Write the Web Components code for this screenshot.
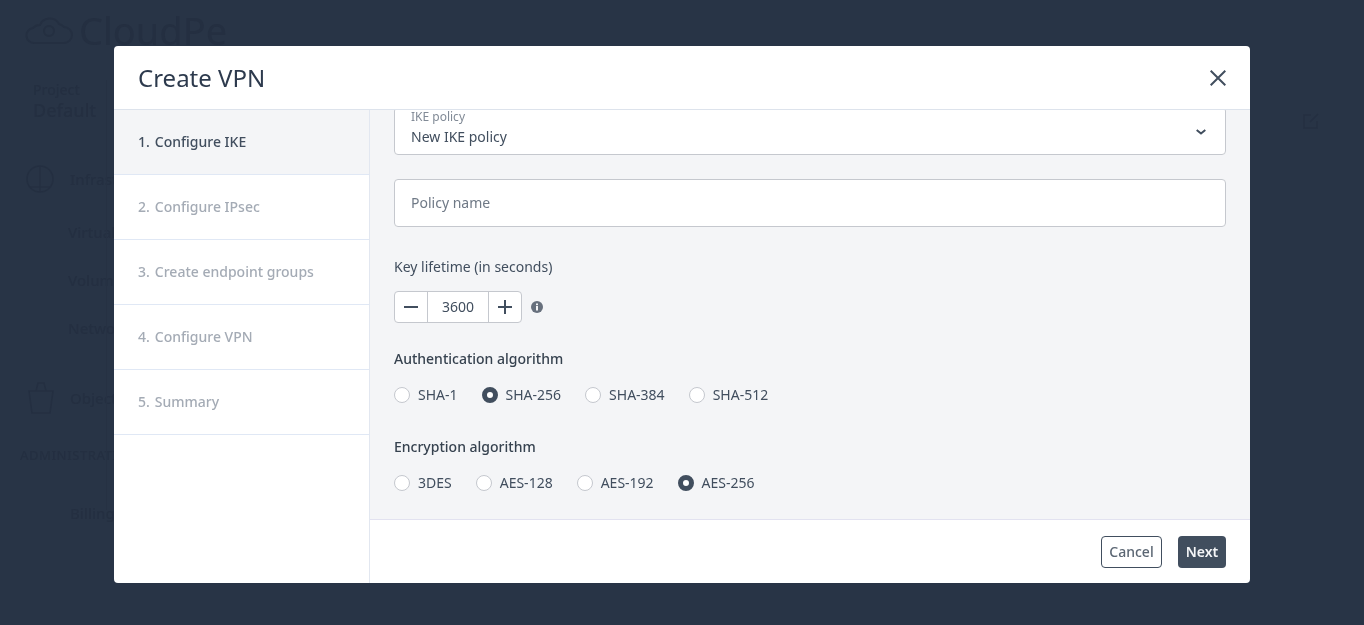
<!DOCTYPE html>
<html><head><meta charset="utf-8"><style>
html,body{margin:0;height:100%;overflow:hidden;background:#283446;font-family:"Noto Sans","Open Sans",sans-serif}
</style></head><body>
<app-backdrop></app-backdrop>
<vpn-modal title="Create VPN">
  <wizard-steps slot="steps"></wizard-steps>
  <ike-select label="IKE policy" value="New IKE policy"></ike-select>
  <text-field placeholder="Policy name"></text-field>
  <num-stepper label="Key lifetime (in seconds)" value="3600"></num-stepper>
  <radio-group style="--mt:26px" label="Authentication algorithm" options="SHA-1,SHA-256,SHA-384,SHA-512" checked="SHA-256"></radio-group>
  <radio-group style="--mt:32px" label="Encryption algorithm" options="3DES,AES-128,AES-192,AES-256" checked="AES-256"></radio-group>
  <action-btn slot="footer" style="--w:61px;--wt:530">Cancel</action-btn>
  <action-btn slot="footer" style="--w:48px" primary>Next</action-btn>
</vpn-modal>
<script>
function def(name, html, init){
  customElements.define(name, class extends HTMLElement{
    connectedCallback(){
      if(this.shadowRoot) return;
      const r=this.attachShadow({mode:'open'});
      r.innerHTML=typeof html==='function'?html(this):html;
      if(init) init(this,r);
    }
  });
}
def('app-backdrop',`<style>
:host{display:block;position:fixed;inset:0;color:#242f41;overflow:hidden;font-weight:500}
.top{display:flex;align-items:center;gap:5px;padding:10px 0 0 25px;height:40px;font-size:38px;line-height:40px;font-weight:400}
.wrap{position:relative;margin-top:30px;padding-left:33px}
.rule{width:1px;height:430px;background:#263143;position:absolute;left:106px;top:0}
.p{font-size:14px;line-height:20px}
.d{font-size:18px;line-height:24px;margin-top:-2px}
.i{display:flex;align-items:center;gap:16px;font-size:15px;line-height:20px;margin-left:-7px;white-space:nowrap}
.t{font-size:15px;line-height:20px;margin-left:35px}
.link{position:absolute;left:1302px;top:112px}
</style>
<div class="top"><svg width="49" height="29" viewBox="0 0 49 29" fill="none" stroke="#242f41" stroke-width="2"><path d="M10 27a7.500 7.500 0 0 1-2-15 9 9 0 0 1 7-3c3-8 15-9 19-1a9 9 0 0 1 5 3 8 8 0 0 1 0 16z"/><circle cx="24" cy="15" r="5"/></svg><span>CloudPe</span></div>
<div class="wrap"><div class="rule"></div>
<div class="p">Project</div><div class="d">Default</div>
<div class="i" style="margin-top:43px"><svg width="28" height="28" viewBox="0 0 28 28" fill="none" stroke="#242f41" stroke-width="1.500"><circle cx="14" cy="14" r="13"/><path d="M4 22h20M14 1v26"/></svg><span>Infrastructure</span></div>
<div class="t" style="margin-top:29px">Virtual</div>
<div class="t" style="margin-top:28px">Volumes</div>
<div class="t" style="margin-top:28px">Network</div>
<div class="i" style="margin-top:44px;margin-left:-5px;gap:16px"><svg width="26" height="32" viewBox="0 0 26 32" fill="none" stroke="#242f41" stroke-width="1.500"><path d="M1 9h24l-3 22H4zM8 9l2-8h6l2 8"/></svg><span>Object</span></div>
<div style="font-size:13px;line-height:18px;margin:32px 0 0 -13px;letter-spacing:.5px;white-space:nowrap">ADMINISTRATION</div>
<div class="t" style="margin:39px 0 0 37px">Billing</div>
</div>
<svg class="link" width="18" height="18" viewBox="0 0 18 18" fill="none" stroke="#242f41" stroke-width="1.500"><path d="M9 3H2v13h13V9M8 10l8-8"/></svg>`);

def('vpn-modal',h=>`<style>
:host{display:block;position:fixed;inset:0;padding-top:46px;box-sizing:border-box}
.box{width:1136px;height:537px;margin:0 auto;background:#fff;border-radius:4px;overflow:hidden;display:flex;flex-direction:column}
header{height:64px;box-sizing:border-box;border-bottom:1px solid #dde3ec;display:flex;align-items:center;justify-content:space-between;padding:0 24px;flex:none}
h1{margin:0;font-size:24px;font-weight:400;color:#2d3a4d;line-height:33px}
.x{width:16px;height:16px;display:block;margin-bottom:-1px}
.main{flex:1;display:flex;min-height:0}
aside{width:256px;box-sizing:border-box;border-right:1px solid #e2e7f0;flex:none}
.right{flex:1;display:flex;flex-direction:column;min-width:0}
.content{flex:1;background:#f4f5f7;padding:0 24px;overflow:hidden;min-height:0}
footer{height:64px;box-sizing:border-box;border-top:1px solid #e2e2f0;display:flex;align-items:center;justify-content:flex-end;gap:16px;padding:0 24px;flex:none}
</style>
<div class="box"><header><h1>${h.getAttribute('title')}</h1>
<svg class="x" viewBox="0 0 16 16" fill="none" stroke="#414e5e" stroke-width="2"><path d="M.7.7l14.600 14.600M15.300.7L.7 15.300"/></svg></header>
<div class="main"><aside><slot name="steps"></slot></aside>
<div class="right"><div class="content"><slot></slot></div><footer><slot name="footer"></slot></footer></div></div></div>`);

def('wizard-steps',()=>{
  const s=['Configure IKE','Configure IPsec','Create endpoint groups','Configure VPN','Summary'];
  return `<style>
:host{display:block}
.s{height:65px;box-sizing:border-box;border-bottom:1px solid #e0e8f5;display:flex;align-items:center;padding:0 0 2px 24px;font-size:14px;font-weight:530;color:#a4abb5;gap:5px}
.s.on{background:#f4f5f7;color:#414e5e}
</style>`+s.map((t,i)=>`<div class="s${i?'':' on'}"><span>${i+1}.</span><span>${t}</span></div>`).join('');
});

def('ike-select',h=>`<style>
:host{display:block;margin-top:-3px}
.b{height:48px;box-sizing:border-box;background:#fff;border:1px solid #c5c8ce;border-radius:4px;padding:1px 19px 0 16px;display:flex;justify-content:space-between;align-items:flex-start}
.l{font-size:12px;line-height:16px;color:#818a96}
.v{font-size:14px;line-height:20px;color:#414e5e;margin-top:2px}
svg{display:block;margin-top:20px}
</style><div class="b"><div><div class="l">${h.getAttribute('label')}</div><div class="v">${h.getAttribute('value')}</div></div>
<svg width="10" height="6" viewBox="0 0 10 6" fill="none" stroke="#414e5e" stroke-width="2"><path d="M.7 1L5 4.500 9.300 1"/></svg></div>`);

def('text-field',h=>`<style>
:host{display:block;margin-top:24px}
.b{height:48px;box-sizing:border-box;background:#fff;border:1px solid #c5c8ce;border-radius:4px;padding:0 16px 2px;display:flex;align-items:center;font-size:14px;color:#6f7986}
</style><div class="b">${h.getAttribute('placeholder')}</div>`);

def('num-stepper',h=>`<style>
:host{display:block;margin-top:30px;color:#414e5e;font-size:14px}
.l{line-height:20px}
.row{display:flex;align-items:center;margin-top:14px;gap:9px}
.st{display:flex;width:128px;height:32px;box-sizing:border-box;background:#fff;border:1px solid #c5c8ce;border-radius:4px}
.btn{display:flex;align-items:center;justify-content:center;width:32px;flex:none}
.v{width:62px;flex:none;box-sizing:border-box;border:solid #c5c8ce;border-width:0 1px;text-align:center;line-height:30px}
</style><div class="l">${h.getAttribute('label')}</div>
<div class="row"><div class="st"><div class="btn"><svg width="14" height="14" viewBox="0 0 14 14" stroke="#414e5e" stroke-width="2"><path d="M0 7h14"/></svg></div>
<div class="v">${h.getAttribute('value')}</div>
<div class="btn"><svg width="14" height="14" viewBox="0 0 14 14" stroke="#414e5e" stroke-width="2"><path d="M0 7h14M7 0v14"/></svg></div></div>
<svg width="12" height="12" viewBox="0 0 12 12"><circle cx="6" cy="6" r="6" fill="#67707d"/><rect x="5" y="5" width="2" height="4.500" fill="#f4f5f7"/><rect x="5" y="2.500" width="2" height="1.700" fill="#f4f5f7"/></svg></div>`);

def('radio-group',h=>{
  const c=h.getAttribute('checked');
  return `<style>
:host{display:block;margin-top:var(--mt,25px);color:#414e5e;font-size:14px}
.l{font-weight:530;line-height:20px;color:#36424f}
.row{display:flex;gap:24px;margin-top:16px}
label{display:flex;align-items:center;gap:8px;line-height:20px}
i{display:block;width:16px;height:16px;box-sizing:border-box;border-radius:50%;border:1px solid #c5c8ce;background:#fff}
i.on{border:5px solid #414e5e;background:#fff}
</style><div class="l">${h.getAttribute('label')}</div><div class="row">`+
  h.getAttribute('options').split(',').map(o=>`<label><i class="${o===c?'on':''}"></i><span>${o}</span></label>`).join('')+`</div>`;
});

def('action-btn',h=>{
  const p=h.hasAttribute('primary');
  return `<style>
:host{display:block;width:var(--w)}
.b{height:32px;box-sizing:border-box;border-radius:4px;display:flex;align-items:center;justify-content:center;font-size:14px;font-weight:var(--wt,600);
${p?'background:#414e5e;color:#f4f5f7;':'background:#fff;border:1px solid #414e5e;color:#5b6673;'}}
</style><div class="b"><slot></slot></div>`;
});
</script>
</body></html>
